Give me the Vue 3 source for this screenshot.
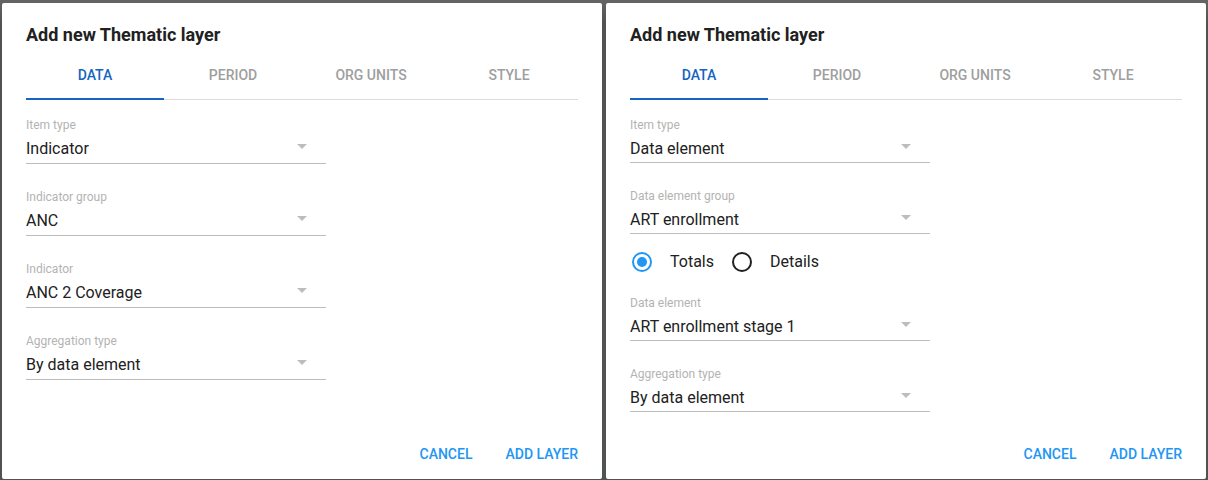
<script setup>
import { reactive } from 'vue'

const tabs = ['Data', 'Period', 'Org units', 'Style']

const dialogs = reactive([
  {
    id: 'indicator',
    tab: 'Data',
    compact: false,
    rows: [
      { label: 'Item type', value: 'Indicator' },
      { label: 'Indicator group', value: 'ANC' },
      { label: 'Indicator', value: 'ANC 2 Coverage' },
      { label: 'Aggregation type', value: 'By data element' },
    ],
  },
  {
    id: 'element',
    tab: 'Data',
    compact: true,
    rows: [
      { label: 'Item type', value: 'Data element' },
      { label: 'Data element group', value: 'ART enrollment' },
      { radios: ['Totals', 'Details'], value: 'Totals' },
      { label: 'Data element', value: 'ART enrollment stage 1' },
      { label: 'Aggregation type', value: 'By data element' },
    ],
  },
])
</script>

<template>
  <main class="backdrop">
    <section
      v-for="d in dialogs"
      :key="d.id"
      class="dialog"
      :class="{ compact: d.compact }"
      role="dialog"
      :aria-labelledby="d.id + '-title'"
    >
      <h2 :id="d.id + '-title'" class="title">Add new Thematic layer</h2>
      <div class="tabs" role="tablist">
        <button
          v-for="t in tabs"
          :key="t"
          type="button"
          role="tab"
          class="tab"
          :class="{ active: d.tab === t }"
          :aria-selected="d.tab === t"
          @click="d.tab = t"
        >{{ t }}</button>
      </div>
      <form class="body" @submit.prevent>
        <template v-for="(row, i) in d.rows" :key="i">
          <div v-if="row.radios" class="radios" role="radiogroup">
            <label v-for="r in row.radios" :key="r" class="radio">
              <input v-model="row.value" type="radio" :name="d.id + '-mode'" :value="r" />
              <span>{{ r }}</span>
            </label>
          </div>
          <div v-else class="field">
            <label class="label" :for="d.id + i">{{ row.label }}</label>
            <div class="control">
              <select :id="d.id + i" class="select">
                <option>{{ row.value }}</option>
              </select>
              <svg class="arrow" viewBox="0 0 10 5" aria-hidden="true"><path d="M0 0h10L5 5z" /></svg>
            </div>
          </div>
        </template>
      </form>
      <footer class="actions">
        <button type="button" class="action">Cancel</button>
        <button type="button" class="action">Add layer</button>
      </footer>
    </section>
  </main>
</template>

<style>
body {
  background: #505352;
}
</style>

<style scoped>
.backdrop {
  box-sizing: border-box;
  min-height: 100vh;
  display: grid;
  grid-template-columns: 1fr 1fr;
  gap: 4px;
  padding: 3px 2px 1px;
  background: linear-gradient(#646464, #505352 24px, #505352);
  font-family: Roboto, sans-serif;
  color: #212121;
}
.dialog {
  display: flex;
  flex-direction: column;
  padding: 20px 24px 13px;
  background: #fff;
  border-radius: 2px;
}
.title {
  margin: 0;
  font-size: 18px;
  font-weight: 700;
  line-height: 24px;
}
.tabs {
  display: flex;
  border-bottom: 1px solid #dcdcdc;
}
.tab {
  flex: 1;
  height: 50px;
  margin: 3px 0 -1px;
  padding: 2px 0 0;
  border: 0;
  border-bottom: 2px solid transparent;
  background: none;
  color: #9e9e9e;
  font: 500 14px/20px Roboto, sans-serif;
  text-transform: uppercase;
  cursor: pointer;
}
.tab.active {
  color: #1565c0;
  border-bottom-color: #1565c0;
}
.body {
  flex: 1;
  padding-top: 2px;
}
.field {
  max-width: 300px;
  padding: 16px 0 10px;
}
.label {
  display: block;
  color: #b3b3b3;
  font-size: 12px;
  line-height: 14px;
}
.control {
  position: relative;
  border-bottom: 1px solid #bdbdbd;
}
.select {
  display: block;
  width: 100%;
  height: 31px;
  margin: 0;
  padding: 2px 32px 0 0;
  border: 0;
  border-radius: 0;
  appearance: none;
  background: none;
  color: #212121;
  font: 400 16px/20px Roboto, sans-serif;
}
.compact .select {
  height: 30px;
  padding-top: 4px;
}
.arrow {
  position: absolute;
  top: 12px;
  right: 19px;
  width: 10px;
  height: 5px;
  fill: #bdbdbd;
  pointer-events: none;
}
.radios {
  display: flex;
  align-items: center;
  gap: 18px;
  height: 36px;
  padding-left: 2px;
}
.radio {
  display: flex;
  align-items: center;
  gap: 18px;
  font-size: 16px;
  line-height: 20px;
}
.radio input {
  appearance: none;
  box-sizing: border-box;
  width: 20px;
  height: 20px;
  margin: 0;
  border: 2px solid #212121;
  border-radius: 50%;
}
.radio input:checked {
  border-color: #2196f3;
  padding: 3px;
  background: #2196f3 content-box;
}
.actions {
  display: flex;
  justify-content: flex-end;
  gap: 33px;
}
.action {
  padding: 0;
  border: 0;
  background: none;
  color: #2196f3;
  font: 500 14px/24px Roboto, sans-serif;
  text-transform: uppercase;
  cursor: pointer;
}
</style>
